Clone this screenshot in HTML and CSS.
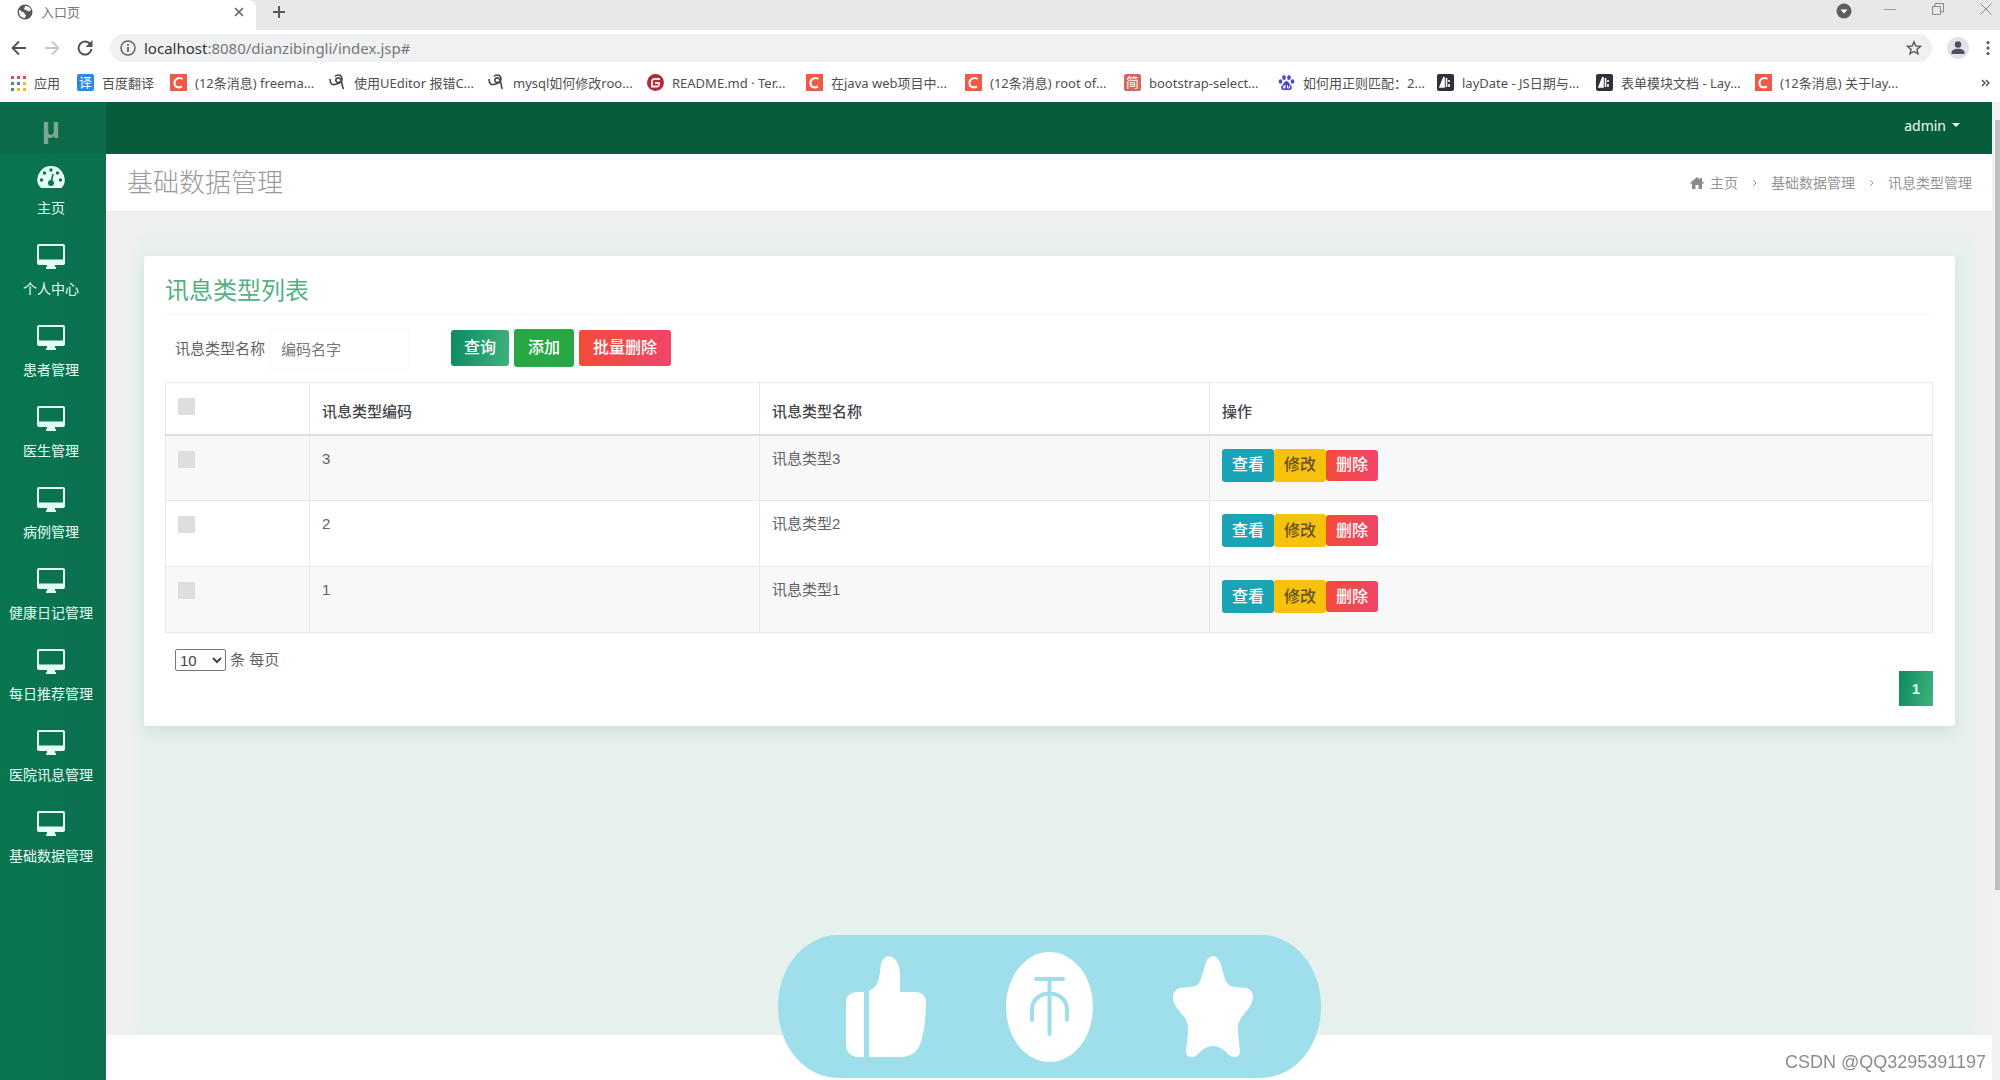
FILE: index.html
```html
<!DOCTYPE html>
<html lang="zh-CN">
<head>
<meta charset="utf-8">
<title>入口页</title>
<link rel="stylesheet" href="styles.css">
</head>
<body>
<svg class="defs" aria-hidden="true">
  <symbol id="monitor" viewBox="0 0 28 25"><path fill="currentColor" fill-rule="evenodd" d="M2 0h24a2 2 0 0 1 2 2v17a2 2 0 0 1-2 2h-8v2h1v2H9v-2h1v-2H2a2 2 0 0 1-2-2V2a2 2 0 0 1 2-2zm0 2v13.500h24V2z"/></symbol>
  <symbol id="csdn" viewBox="0 0 17 17"><path fill="#ee5a43" d="M0 0h17v17H0z"/><path d="M12.500 5C9 3 4.500 4.500 4.500 9s4 5.200 7.500 3.500" fill="none" stroke="#fff" stroke-width="2"/></symbol>
  <symbol id="ueditor" viewBox="0 0 17 17"><path d="M1 5c0 4 1.500 6 4.500 5.500 2-.5 3.500-1 6-2M6 2.500c3-3 7-1 7 2.500s-5 4.500-6 2 2-4 4-2.500c2.500 2 1.500 7 3.500 10.500" fill="none" stroke="#444" stroke-width="1.600"/></symbol>
  <symbol id="layui" viewBox="0 0 17 17"><rect width="17" height="17" rx="2" fill="#2f3038"/><path d="M7 3v10H3zM9.500 4v9M12 6v2M12 10v3" fill="#fff" stroke="#fff" stroke-width="1.600"/></symbol>
</svg>

<header class="browser">
  <div class="tabs">
    <div class="tab">
      <svg class="i16" viewBox="0 0 16 16"><circle cx="8" cy="8" r="7.500" fill="#55585c"/><path d="M2 6c2 0 2 2 4 2s1 3 3 3l-1 3C4 14 1.500 11 2 6zM8 2c0 2-1 2-1 3s3 1 4 2 2 0 3-1C13 3 11 2 8 2z" fill="#fff"/></svg>
      <span class="tab-name">入口页</span>
      <button class="plain" aria-label="关闭标签页"><svg width="10" height="10" viewBox="0 0 10 10"><path d="M1 1l8 8M9 1L1 9" stroke="#5f6368" stroke-width="1.600"/></svg></button>
    </div>
    <button class="plain new-tab" aria-label="新标签页"><svg width="14" height="14" viewBox="0 0 14 14"><path d="M7 1v12M1 7h12" stroke="#55585c" stroke-width="2"/></svg></button>
    <div class="window-controls">
      <button class="plain search-tabs" aria-label="标签搜索"><svg width="16" height="16" viewBox="0 0 16 16"><circle cx="8" cy="8" r="7.500" fill="#5c5e61"/><path d="M4.500 6.500h7L8 10.500z" fill="#fff"/></svg></button>
      <button class="plain raised" aria-label="最小化"><svg width="12" height="12" viewBox="0 0 12 12"><path d="M0 6.500h12" stroke="#999"/></svg></button>
      <button class="plain raised" aria-label="还原"><svg width="12" height="12" viewBox="0 0 12 12"><path d="M.5 3.500h8v8h-8zM3 3V.5h8.500v8.500H9" fill="none" stroke="#888"/></svg></button>
      <button class="plain raised" aria-label="关闭"><svg width="12" height="12" viewBox="0 0 12 12"><path d="M.5.5l11 11M11.500.5l-11 11" stroke="#888"/></svg></button>
    </div>
  </div>
  <div class="toolbar">
    <button class="plain" aria-label="后退"><svg width="16" height="16" viewBox="0 0 16 16"><path d="M15 8H2M8 1.500L1.500 8 8 14.500" fill="none" stroke="#505357" stroke-width="1.800"/></svg></button>
    <button class="plain" aria-label="前进"><svg width="16" height="16" viewBox="0 0 16 16"><path d="M1 8h13M8 1.500L14.500 8 8 14.500" fill="none" stroke="#c4c6c8" stroke-width="1.800"/></svg></button>
    <button class="plain" aria-label="刷新"><svg width="16" height="16" viewBox="0 0 16 16"><path d="M13.500 4.500A6.500 6.500 0 1 0 14.500 9" fill="none" stroke="#505357" stroke-width="2"/><path d="M15.500 0v7h-7z" fill="#505357"/></svg></button>
    <div class="address">
      <svg class="i16" viewBox="0 0 16 16"><circle cx="8" cy="8" r="7" fill="none" stroke="#5f6368" stroke-width="1.500"/><path d="M8 7v5M8 4v1.700" stroke="#5f6368" stroke-width="1.800"/></svg>
      <span class="url"><b>localhost</b>:8080/dianzibingli/index.jsp#</span>
      <svg class="i16" viewBox="0 0 16 16"><path d="M8 1.800l1.800 4.200 4.600.4-3.500 3 1.100 4.500L8 11.500l-4 2.400 1.100-4.500-3.500-3 4.600-.4z" fill="none" stroke="#55585c" stroke-width="1.400"/></svg>
    </div>
    <button class="plain" aria-label="用户"><svg width="22" height="22" viewBox="0 0 22 22"><circle cx="11" cy="11" r="11" fill="#e1e2e6"/><circle cx="11" cy="7.500" r="3.200" fill="#4d5060"/><path d="M4.500 17v-1.500c0-5 13-5 13 0V17z" fill="#4d5060"/></svg></button>
    <button class="plain" aria-label="菜单"><svg width="4" height="16" viewBox="0 0 4 16"><g fill="#55585c"><circle cx="2" cy="2.500" r="1.600"/><circle cx="2" cy="8" r="1.600"/><circle cx="2" cy="13.500" r="1.600"/></g></svg></button>
  </div>
  <nav class="bookmarks" aria-label="书签">
    <a class="apps" href="#"><svg class="i16" viewBox="0 0 16 16"><path fill="#d9534a" d="M1 1h3v3H1zM7 1h3v3H7zM13 1h3v3h-3z"/><path fill="#4a9a5d" d="M1 7h3v3H1z"/><path fill="#3f83d8" d="M7 7h3v3H7z"/><path fill="#e7b93c" d="M13 7h3v3h-3zM7 13h3v3H7zM13 13h3v3h-3z"/><path fill="#4a9a5d" d="M1 13h3v3H1z"/></svg>应用</a>
    <a class="fanyi" href="#"><span class="glyph blue">译</span>百度翻译</a>
    <a href="#"><svg class="i17"><use href="#csdn"/></svg>(12条消息) freema...</a>
    <a href="#"><svg class="i17"><use href="#ueditor"/></svg>使用UEditor 报错C...</a>
    <a href="#"><svg class="i17"><use href="#ueditor"/></svg>mysql如何修改roo...</a>
    <a href="#"><svg class="i17" viewBox="0 0 17 17"><circle cx="8.500" cy="8.500" r="8.500" fill="#bd2438"/><path d="M13 5H8C5 5 5 6 5 9v3.500h5.500c1.500 0 1.500-1 1.500-3.500H8" fill="none" stroke="#fff" stroke-width="1.800"/></svg>README.md · Ter...</a>
    <a href="#"><svg class="i17"><use href="#csdn"/></svg>在java web项目中...</a>
    <a href="#"><svg class="i17"><use href="#csdn"/></svg>(12条消息) root of...</a>
    <a class="jianshu" href="#"><span class="glyph red">简</span>bootstrap-select...</a>
    <a href="#"><svg class="i17" viewBox="0 0 17 17"><g fill="#4a48d0"><ellipse cx="6" cy="3.500" rx="1.800" ry="2.500"/><ellipse cx="11" cy="3.500" rx="1.800" ry="2.500"/><ellipse cx="2.500" cy="7.500" rx="1.800" ry="2.300"/><ellipse cx="14.500" cy="7.500" rx="1.800" ry="2.300"/><path d="M8.500 7c2 0 3 3 4.500 4.500 2 2.500 0 5-2.500 4.500h-4C4 16.500 2 14 4 11.500 5.500 10 6.500 7 8.500 7z"/></g><path d="M7 11v3H5.500v-2H7M9.500 11v3h2v-2.500" fill="none" stroke="#fff"/></svg>如何用正则匹配：2...</a>
    <a href="#"><svg class="i17"><use href="#layui"/></svg>layDate - JS日期与...</a>
    <a href="#"><svg class="i17"><use href="#layui"/></svg>表单模块文档 - Lay...</a>
    <a href="#"><svg class="i17"><use href="#csdn"/></svg>(12条消息) 关于lay...</a>
    <button class="plain more" aria-label="更多书签"><svg width="9" height="8" viewBox="0 0 9 8"><path d="M1 1l3 3-3 3M5 1l3 3-3 3" fill="none" stroke="#444" stroke-width="1.300"/></svg></button>
  </nav>
</header>

<div class="viewport">
  <aside class="sidebar">
    <a class="logo" href="#">μ</a>
    <nav class="menu">
      <a href="#"><svg width="28" height="25" viewBox="0 0 28 25"><path fill="currentColor" d="M4 25C0 21 0 18 .5 15 2 7.500 7 3 14 3s12 4.500 13.500 12c.5 3 .5 6-3 10z"/><g fill="#0a7350"><circle cx="4.500" cy="17" r="1.700"/><circle cx="7.500" cy="10" r="1.700"/><circle cx="14" cy="7" r="1.700"/><circle cx="20.500" cy="10" r="1.700"/><circle cx="23.500" cy="17" r="1.700"/><circle cx="14" cy="20" r="3"/></g><path d="M14 20l2-9" stroke="#0a7350" stroke-width="1.600"/></svg>主页</a>
      <a href="#"><svg width="28" height="25"><use href="#monitor"/></svg>个人中心</a>
      <a href="#"><svg width="28" height="25"><use href="#monitor"/></svg>患者管理</a>
      <a href="#"><svg width="28" height="25"><use href="#monitor"/></svg>医生管理</a>
      <a href="#"><svg width="28" height="25"><use href="#monitor"/></svg>病例管理</a>
      <a href="#"><svg width="28" height="25"><use href="#monitor"/></svg>健康日记管理</a>
      <a href="#"><svg width="28" height="25"><use href="#monitor"/></svg>每日推荐管理</a>
      <a href="#"><svg width="28" height="25"><use href="#monitor"/></svg>医院讯息管理</a>
      <a href="#"><svg width="28" height="25"><use href="#monitor"/></svg>基础数据管理</a>
    </nav>
  </aside>

  <div class="page">
    <div class="navbar"><button class="plain user">admin <span class="caret"></span></button></div>
    <div class="page-head">
      <h1>基础数据管理</h1>
      <nav class="crumbs" aria-label="面包屑">
        <a href="#"><svg width="14" height="12" viewBox="0 0 14 12"><path fill="#8b8b8b" d="M7 0l3 2.500V1h2v3.200L14 6l-1 1-1-.8V12H8.500V8h-3v4H2V6.200L1 7 0 6z"/></svg>主页</a>
        <svg class="sep" viewBox="0 0 5 8"><path d="M1 1l3 3-3 3" fill="none" stroke="#999"/></svg>
        <a href="#">基础数据管理</a>
        <svg class="sep" viewBox="0 0 5 8"><path d="M1 1l3 3-3 3" fill="none" stroke="#999"/></svg>
        <span>讯息类型管理</span>
      </nav>
    </div>
    <main class="content">
      <div class="tint">
        <section class="card">
          <h2>讯息类型列表</h2>
          <form class="search">
            <label for="type-name">讯息类型名称</label>
            <input id="type-name" type="text" placeholder="编码名字">
            <button type="button" class="btn query">查询</button>
            <button type="button" class="btn add">添加</button>
            <button type="button" class="btn danger">批量删除</button>
          </form>
          <table>
            <colgroup><col class="c-check"><col class="c-text"><col class="c-text"><col></colgroup>
            <thead>
              <tr><th><input type="checkbox" aria-label="全选"></th><th>讯息类型编码</th><th>讯息类型名称</th><th>操作</th></tr>
            </thead>
            <tbody>
              <tr><td><input type="checkbox" aria-label="选择 3"></td><td>3</td><td>讯息类型3</td><td><div class="actions"><button class="btn view">查看</button><button class="btn edit">修改</button><button class="btn danger">删除</button></div></td></tr>
              <tr><td><input type="checkbox" aria-label="选择 2"></td><td>2</td><td>讯息类型2</td><td><div class="actions"><button class="btn view">查看</button><button class="btn edit">修改</button><button class="btn danger">删除</button></div></td></tr>
              <tr><td><input type="checkbox" aria-label="选择 1"></td><td>1</td><td>讯息类型1</td><td><div class="actions"><button class="btn view">查看</button><button class="btn edit">修改</button><button class="btn danger">删除</button></div></td></tr>
            </tbody>
          </table>
          <div class="page-size">
            <select id="size"><option>10</option><option>25</option></select>
            <label for="size">条 每页</label>
          </div>
          <div class="pager"><button class="current">1</button></div>
        </section>
      </div>
    </main>
    <footer class="foot"></footer>
  </div>
  <div class="scrollbar"><div class="thumb"></div></div>
</div>

<div class="reactions">
  <svg width="80" height="101" viewBox="0 0 80 101"><path fill="#fff" d="M18 36v65H10Q0 99 0 88V48Q0 37 10 36zM23 101V35Q33 31 34 16L35 8Q38 0 43 0 53 2 54 18V36H70Q79 36 80 46 80 68 75 86 71 99 58 101z"/></svg>
  <svg width="87" height="110" viewBox="0 0 87 110"><ellipse cx="43.500" cy="55" rx="43.500" ry="55" fill="#fff"/><path d="M30 27h27M43.500 28v54M26 68V58c0-22 35-22 35 0v10" fill="none" stroke="#9fdfec" stroke-width="4" stroke-linecap="round"/></svg>
  <svg width="80" height="101" viewBox="0 0 80 101"><path fill="#fff" d="M33 6Q36 0 40 0t7 6l5 17q2 7 10 8l11 1q7 2 7 9 0 5-5 12l-7 9q-4 6-3 15l2 18q0 6-6 6-4 0-9-6-6-5-12-5t-12 5q-5 6-9 6-6 0-6-6l2-18q1-9-3-15l-8-10q-4-6-4-11 0-7 7-9l11-1q8-1 10-8z"/></svg>
</div>
<div class="watermark">CSDN @QQ3295391197</div>
</body>
</html>
```
FILE: styles.css
```css
* { box-sizing: border-box; }
body {
  margin: 0;
  min-height: 100vh;
  display: flex;
  flex-direction: column;
  background: #fff;
  color: #5f6168;
  font: 15px/22px "Liberation Sans", "Noto Sans CJK SC", sans-serif;
}
a { color: inherit; text-decoration: none; }
button, input, select { font: inherit; }
svg { display: block; flex: none; }
.defs { display: none; }
.plain { border: 0; padding: 0; background: none; color: inherit; display: block; }
.i16 { width: 16px; height: 16px; }
.i17 { width: 17px; height: 17px; }

/* Browser chrome */
.browser { font-family: "Noto Sans", "Noto Sans CJK SC", sans-serif; }
.tabs { display: flex; align-items: flex-start; height: 30px; background: #e7e8ea; }
.tab {
  width: 256px;
  height: 30px;
  display: flex;
  align-items: center;
  gap: 8px;
  padding: 0 12px 6px 17px;
  border-radius: 0 8px 0 0;
  background: #fff;
}
.tab-name { flex: 1; font-size: 13px; color: #777; }
.new-tab { margin: 5px 0 0 16px; }
.window-controls { margin-left: auto; display: flex; gap: 36px; padding: 3px 8px 0 0; }
.search-tabs { margin-right: -4px; }
.raised { height: 12px; }
.toolbar { height: 38px; display: flex; align-items: center; gap: 17px; padding: 0 10px 2px 11px; }
.address {
  flex: 1;
  height: 28px;
  display: flex;
  align-items: center;
  gap: 8px;
  margin-right: -2px;
  padding: 0 10px;
  border-radius: 14px;
  background: #f0f1f3;
}
.url { flex: 1; font-size: 15px; color: #777; }
.url b { font-weight: 400; color: #333; }
.bookmarks { height: 34px; display: flex; align-items: center; padding: 0 10px 5px; font-size: 13px; color: #505050; white-space: nowrap; }
.bookmarks a { flex: 0 1 159px; display: flex; align-items: center; gap: 8px; }
.bookmarks .apps { flex-basis: 67px; }
.bookmarks .fanyi { flex-basis: 93px; }
.bookmarks .jianshu { flex-basis: 154px; }
.bookmarks .more { margin-left: auto; }
.glyph { width: 17px; height: 17px; line-height: 17px; text-align: center; border-radius: 2px; color: #fff; }
.blue { background: #2b86e5; }
.red { background: #dc655b; }

/* Application frame */
.viewport { flex: 1; display: flex; }
.sidebar {
  flex: 0 0 106px;
  background: linear-gradient(90deg, #08764f, #0c7051);
  color: #e4fff5;
  font-size: 14px;
}
.logo { height: 52px; display: block; background: #0b6a47; color: #7fa797; text-align: center; font-size: 30px; font-weight: 700; line-height: 52px; padding-right: 4px; }
.menu a { height: 81px; display: flex; flex-direction: column; align-items: center; gap: 10px; padding: 9px 4px 0 0; line-height: 20px; white-space: nowrap; }
.page { flex: 1; display: flex; flex-direction: column; min-width: 0; }
.navbar { height: 52px; display: flex; align-items: center; justify-content: flex-end; padding: 0 32px 6px; background: #075c3c; color: #e9fff6; }
.user { display: flex; align-items: center; gap: 6px; font: 14px "Noto Sans", sans-serif; }
.caret { border: 4px solid transparent; border-top-color: currentColor; border-bottom: 0; }
.page-head { height: 58px; display: flex; align-items: center; justify-content: space-between; padding: 1px 20px 0 21px; border-bottom: 1px solid #e9e9ec; }
h1 { margin: 0; font-size: 26px; font-weight: 300; line-height: 32px; color: #9a9a9a; }
.crumbs { display: flex; align-items: center; gap: 14px; font-size: 14px; color: #949494; }
.crumbs a { display: flex; align-items: center; gap: 6px; }
.sep { width: 5px; height: 8px; }
.content { flex: 1; display: flex; padding: 28px 22px 0 34px; background: #efeff2; overflow: hidden; }
.tint { flex: 1; padding: 16px 15px 0 4px; background: #e6f0ed; box-shadow: 0 0 12px 4px #e6f0ed; }
.foot { height: 45px; }
.scrollbar { flex: 0 0 8px; padding: 18px 0 190px 3px; background: #f1f1f3; display: flex; }
.thumb { flex: 1; background: #bfc0c2; }

/* List card */
.card { padding: 21px 22px 20px 21px; border-radius: 3px; background: #fff; box-shadow: 0 6px 14px rgba(60, 100, 90, .1); }
h2 { margin: 0 0 14px; padding-bottom: 9px; border-bottom: 1px solid #f6f6f6; font-size: 24px; font-weight: 400; line-height: 28px; color: #54b184; }
.search { display: flex; align-items: center; height: 40px; margin-bottom: 13px; padding-left: 10px; }
.search input { width: 140px; height: 40px; margin: 0 42px 0 4px; padding: 0 11px; border: 1px solid #f8f8fa; background: #fff; }
.search input::placeholder { color: #777; }
.btn { height: 36px; padding: 0 13px; border: 0; border-radius: 3px; color: #fff; font-size: 16px; font-weight: 500; line-height: 20px; white-space: nowrap; }
.search .btn { margin-right: 5px; margin-bottom: 3px; }
.search .add, .search .danger { padding: 0 14px; }
.query { background: linear-gradient(100deg, #0c8a60, #3eb27e); }
.add { background: #28a745; }
.search .add { height: 38px; }
.danger { background: linear-gradient(100deg, #f34c36, #f1446c); }
table { width: 100%; table-layout: fixed; border-collapse: collapse; }
.c-check { width: 144px; }
.c-text { width: 450px; }
th, td { height: 65px; padding: 13px 12px; border: 1px solid #e9eaec; text-align: left; vertical-align: top; line-height: 20px; }
td { height: 66px; }
th { height: 52px; padding: 19px 12px 11px; border-bottom: 2px solid #dcdee0; color: #44464c; font-weight: 500; }
tbody tr:nth-child(odd) { background: #f8f8f9; }
input[type="checkbox"] { appearance: none; display: block; width: 17px; height: 17px; margin: 2px 0 0; background: #dedede; }
th input[type="checkbox"] { margin-top: -4px; }
.actions { display: flex; align-items: center; }
.actions .btn { height: 33px; padding: 0 10px; }
.actions .danger { height: 31px; }
.view { background: #1ba3b6; }
.actions .edit { background: #f6c20c; color: #66501c; }
.page-size { display: flex; align-items: center; gap: 4px; height: 22px; margin: 16px 0 0 10px; }
.page-size select { width: 51px; height: 22px; padding: 0; border: 1px solid #777; border-radius: 2px; background: #fff; color: #444; }
.pager { display: flex; justify-content: flex-end; }
.current { width: 34px; height: 35px; padding: 0; border: 0; background: linear-gradient(100deg, #0c8a60, #3eb27e); color: #d8fff0; font-weight: 700; }

/* Floating overlays */
.reactions {
  position: fixed;
  left: 778px;
  bottom: 2px;
  width: 543px;
  height: 143px;
  display: flex;
  align-items: center;
  justify-content: space-between;
  padding: 0 68px;
  border-radius: 60px / 71px;
  background: #9fdfec;
}
.watermark { position: fixed; right: 14px; bottom: 7px; font-size: 18px; color: #8b8d8d; }
```
